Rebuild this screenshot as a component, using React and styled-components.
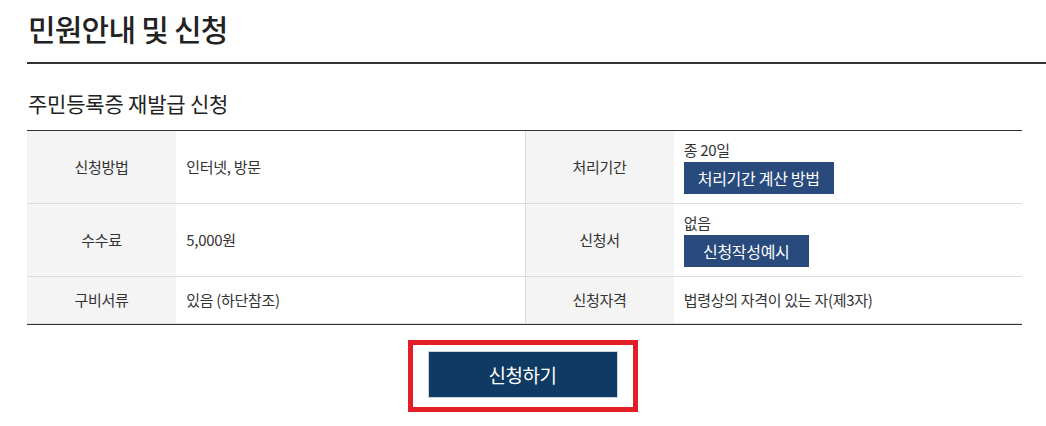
import React from 'react';
import styled, { createGlobalStyle } from 'styled-components';

const GlobalStyle = createGlobalStyle`
  body {
    margin: 0;
    background: #fff;
    font-family: "Noto Sans CJK KR", "Noto Sans", sans-serif;
    color: #333;
  }
`;

const rows = [
  [
    { label: '신청방법', value: '인터넷, 방문' },
    { label: '처리기간', value: '종 20일', button: '처리기간 계산 방법' },
  ],
  [
    { label: '수수료', value: '5,000원' },
    { label: '신청서', value: '없음', button: '신청작성예시' },
  ],
  [
    { label: '구비서류', value: '있음 (하단참조)' },
    { label: '신청자격', value: '법령상의 자격이 있는 자(제3자)' },
  ],
];

export default function App() {
  return (
    <Page>
      <GlobalStyle />
      <PageTitle>민원안내 및 신청</PageTitle>
      <Content>
        <SubTitle>주민등록증 재발급 신청</SubTitle>
        <InfoTable>
          <colgroup>
            <col style={{ width: '15%' }} />
            <col style={{ width: '35%' }} />
            <col style={{ width: '15%' }} />
            <col style={{ width: '35%' }} />
          </colgroup>
          <tbody>
            {rows.map((row, i) => (
              <tr key={i}>
                {row.map((cell, j) => (
                  <React.Fragment key={cell.label}>
                    <Th $divider={j > 0}>{cell.label}</Th>
                    <Td $compact={!!cell.button}>
                      {cell.value}
                      {cell.button && <SmallButton type="button">{cell.button}</SmallButton>}
                    </Td>
                  </React.Fragment>
                ))}
              </tr>
            ))}
          </tbody>
        </InfoTable>
        <Actions>
          <Highlight>
            <ApplyButton type="button">신청하기</ApplyButton>
          </Highlight>
        </Actions>
      </Content>
    </Page>
  );
}

const Page = styled.div`
  padding-left: 27px;
`;

const PageTitle = styled.h2`
  margin: 0;
  padding: 8px 0 14px 1px;
  font-size: 30px;
  line-height: 40px;
  font-weight: 500;
  letter-spacing: -0.8px;
  color: #222;
  border-bottom: 2px solid #333;
`;

const Content = styled.div`
  margin-right: 24px;
`;

const SubTitle = styled.h3`
  margin: 24px 0 12px;
  padding-left: 1px;
  font-size: 21px;
  line-height: 30px;
  font-weight: 400;
  letter-spacing: -0.2px;
  color: #222;
`;

const InfoTable = styled.table`
  width: 100%;
  table-layout: fixed;
  border-collapse: separate;
  border-spacing: 0;
  border-top: 1px solid #333;
  border-bottom: 1px solid #333;
  font-size: 15px;
  line-height: 20px;
  letter-spacing: -0.3px;
`;

const Th = styled.th`
  padding: 13px 10px;
  background: #f4f4f4;
  font-weight: 400;
  color: #333;
  text-align: center;
  vertical-align: middle;
  border-bottom: 1px solid #ddd;
  border-left: ${(p) => (p.$divider ? '1px solid #ddd' : '0')};
`;

const Td = styled.td`
  padding: ${(p) => (p.$compact ? '9px 10px' : '13px 10px')};
  color: #333;
  text-align: left;
  vertical-align: middle;
  border-bottom: 1px solid #ddd;
`;

const SmallButton = styled.button`
  display: block;
  min-width: 125px;
  height: 32px;
  margin-top: 2px;
  padding: 0 14px;
  border: 0;
  background: #284a7d;
  color: #fff;
  font-family: inherit;
  font-size: 16px;
  letter-spacing: -0.3px;
  cursor: pointer;
`;

const Actions = styled.div`
  display: flex;
  justify-content: center;
  padding: 15px 4px 0 0;
`;

const Highlight = styled.div`
  padding: 6px 15px 9px;
  border: 5px solid #e41e26;
`;

const ApplyButton = styled.button`
  display: block;
  width: 190px;
  height: 47px;
  border: 1px solid #cfd4da;
  background: #0f3a63;
  color: #fff;
  font-family: inherit;
  font-size: 19px;
  letter-spacing: -0.5px;
  cursor: pointer;
`;
